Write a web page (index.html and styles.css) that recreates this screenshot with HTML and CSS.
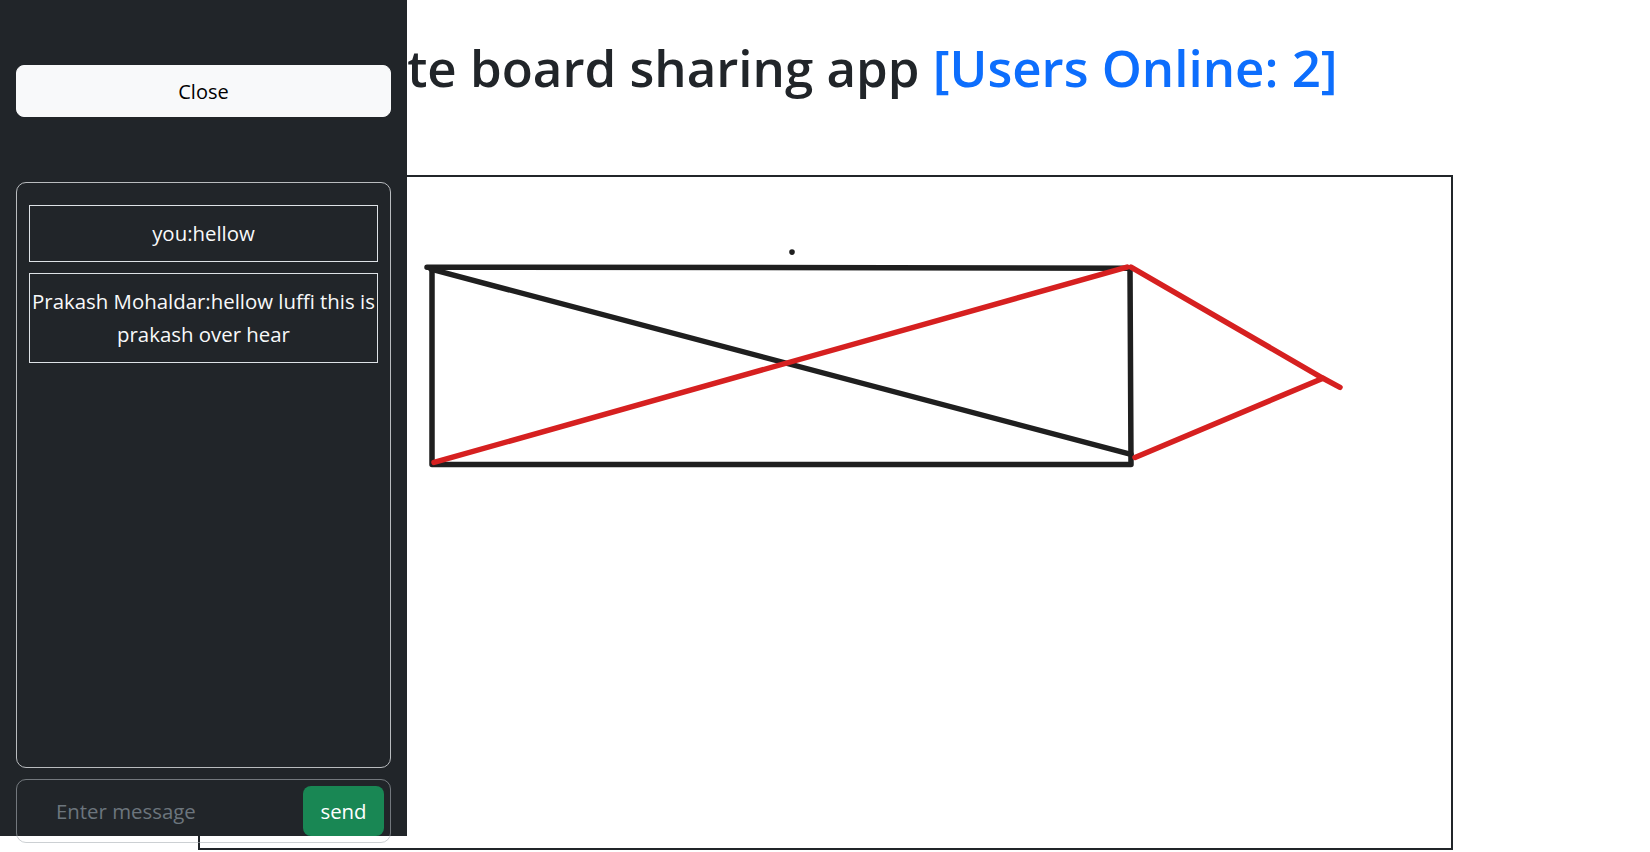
FILE: index.html
```html
<!DOCTYPE html>
<html lang="en">
<head>
<meta charset="utf-8">
<title>White board sharing app</title>
<link rel="stylesheet" href="styles.css">
</head>
<body>
<main class="page">
  <h1 class="title">White board sharing app <span class="online">[Users Online: 2]</span></h1>
  <div class="board">
    <svg class="board-canvas" viewBox="200 177 1251 670" preserveAspectRatio="none" xmlns="http://www.w3.org/2000/svg">
      <g class="ink-black" fill="none" stroke="#1f1f1f" stroke-width="5.5" stroke-linecap="round" stroke-linejoin="round">
        <path d="M427 267 L1130 268 L1131 464 L432 464 L432 269"/>
        <path d="M431 269 L1131 454"/>
      </g>
      <circle cx="792" cy="252" r="2.8" fill="#1f1f1f"/>
      <g class="ink-red" fill="none" stroke="#d62020" stroke-width="5.5" stroke-linecap="round" stroke-linejoin="round">
        <path d="M434 462 L1127 267"/>
        <path d="M1131 267 L1323 378 L1340 387"/>
        <path d="M1323 378 L1135 457"/>
      </g>
    </svg>
  </div>
</main>

<aside class="sidebar">
  <button class="btn-close-panel" type="button">Close</button>
  <div class="chat-box">
    <div class="msg">you:hellow</div>
    <div class="msg">Prakash Mohaldar:hellow luffi this is prakash over hear</div>
  </div>
  <form class="chat-form">
    <input class="chat-input" type="text" placeholder="Enter message">
    <button class="btn-send" type="button">send</button>
  </form>
</aside>
</body>
</html>
```

FILE: styles.css
```css
html, body {
  margin: 0;
  padding: 0;
  overflow: hidden;
  background: #ffffff;
}

body {
  font-family: "Open Sans", "Noto Sans", "Liberation Sans", sans-serif;
  color: #212529;
}

.page {
  width: 1255px;
  margin: 0 auto;
  padding-top: 37px;
}

.title {
  margin: 0;
  text-align: center;
  font-size: 51px;
  line-height: 60px;
  font-weight: 600;
  color: #212529;
  letter-spacing: 0;
}

.online {
  color: #0d6efd;
}

.board {
  margin-top: 78px;
  height: 675px;
  box-sizing: border-box;
  border: 2px solid #212529;
  background: #ffffff;
}

.board-canvas {
  display: block;
  width: 100%;
  height: 100%;
}

.sidebar {
  position: fixed;
  top: 0;
  left: 0;
  width: 407px;
  height: 836px;
  box-sizing: border-box;
  padding: 65px 16px 0;
  background: #212529;
  display: flex;
  flex-direction: column;
}

.btn-close-panel {
  height: 52px;
  border: 1px solid #f8f9fa;
  border-radius: 8px;
  background: #f8f9fa;
  color: #000000;
  font-family: inherit;
  font-size: 20px;
  cursor: pointer;
  flex: none;
}

.chat-box {
  margin-top: 65px;
  height: 586px;
  flex: none;
  box-sizing: border-box;
  border: 1px solid #b9bcbf;
  border-radius: 10px;
  padding: 22px 12px;
  display: flex;
  flex-direction: column;
  gap: 11px;
}

.msg {
  border: 1px solid #dee2e6;
  color: #f8f9fa;
  text-align: center;
  padding: 11px 2px;
  font-size: 20.4px;
  line-height: 33px;
}

.chat-form {
  margin: 11px 0 0;
  height: 64px;
  flex: none;
  box-sizing: border-box;
  border: 1px solid rgba(170, 176, 182, 0.6);
  border-radius: 10px;
  display: flex;
  align-items: center;
  padding: 0 6px 0 0;
}

.chat-input {
  flex: 1;
  min-width: 0;
  background: transparent;
  border: none;
  outline: none;
  padding: 0 0 0 39px;
  font-family: inherit;
  font-size: 20.4px;
  color: #dee2e6;
}

.chat-input::placeholder {
  color: #6c757d;
}

.btn-send {
  width: 81px;
  height: 50px;
  border: none;
  border-radius: 8px;
  background: #198754;
  color: #ffffff;
  font-family: inherit;
  font-size: 20.4px;
  cursor: pointer;
  flex: none;
}
```
